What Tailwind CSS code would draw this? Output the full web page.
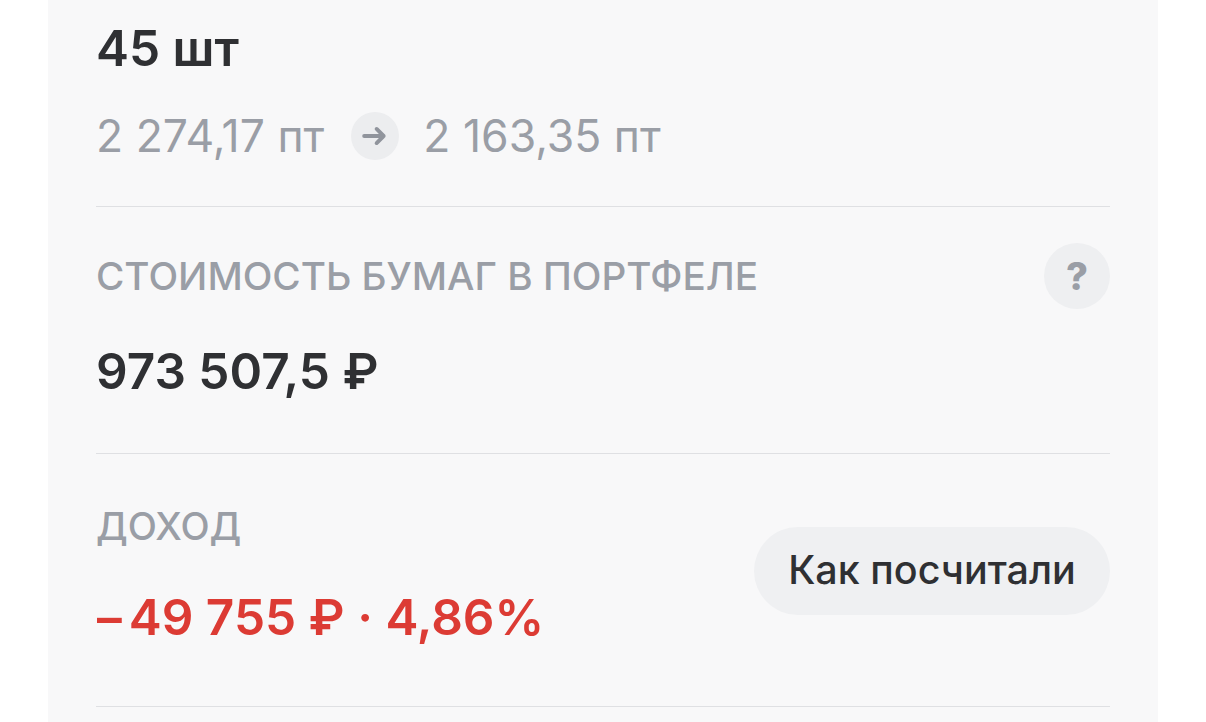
<!DOCTYPE html>
<html lang="ru">
<head>
  <meta charset="UTF-8" />
  <title>Портфель</title>
  <script src="https://cdn.jsdelivr.net/npm/@tailwindcss/browser@4"></script>
</head>
<body class="bg-white h-[722px] overflow-hidden font-['Inter','Liberation_Sans',sans-serif]">
  <main class="ml-[48px] w-[1110px] h-[722px] bg-[#f8f8f9] px-[48px] overflow-hidden">
    <!-- количество -->
    <section class="h-[207px] border-b border-[#dfe0e3]">
      <p class="pt-[20px] text-[49.5px] leading-[56px] font-semibold text-[#2f3033]">45 шт</p>
      <div class="mt-[32px] flex items-center text-[44.5px] leading-[56px] text-[#9a9ea6]">
        <span>2 274,17 пт</span>
        <span class="ml-[27px] mr-[24px] w-[48px] h-[48px] rounded-full bg-[#ecedef] flex items-center justify-center">
          <svg width="26" height="26" viewBox="0 0 24 24" fill="none" stroke="#90949c" stroke-width="3.6" stroke-linecap="round" stroke-linejoin="round"><path d="M2 12h18M13.5 5.5 20 12l-6.500 6.500"/></svg>
        </span>
        <span>2 163,35 пт</span>
      </div>
    </section>
    <!-- стоимость -->
    <section class="h-[247px] border-b border-[#dfe0e3]">
      <div class="pt-[36px] flex items-center justify-between">
        <p class="text-[38.700px] leading-[66px] font-medium text-[#9a9ea6]">СТОИМОСТЬ БУМАГ В ПОРТФЕЛЕ</p>
        <span class="w-[66px] h-[66px] rounded-full bg-[#eeeff1] flex items-center justify-center text-[38px] font-extrabold text-[#9a9ea6]">?</span>
      </div>
      <p class="mt-[34px] text-[49.5px] leading-[56px] font-semibold text-[#2f3033]">973 507,5 ₽</p>
    </section>
    <!-- доход -->
    <section class="h-[253px] border-b border-[#dfe0e3] flex items-start justify-between">
      <div class="pt-[49px]">
        <p class="text-[38px] leading-[46px] font-medium text-[#9a9ea6]">ДОХОД</p>
        <p class="mt-[40px] text-[49.5px] leading-[56px] font-semibold text-[#dc3b34]"><span class="ml-[1px] mr-[7px]">–</span>49 755 ₽ · 4,86%</p>
      </div>
      <button class="mt-[73px] h-[88px] w-[356px] rounded-[44px] bg-[#eff0f2] text-[39.500px] font-medium text-[#2f3033]">Как посчитали</button>
    </section>
  </main>
</body>
</html>
